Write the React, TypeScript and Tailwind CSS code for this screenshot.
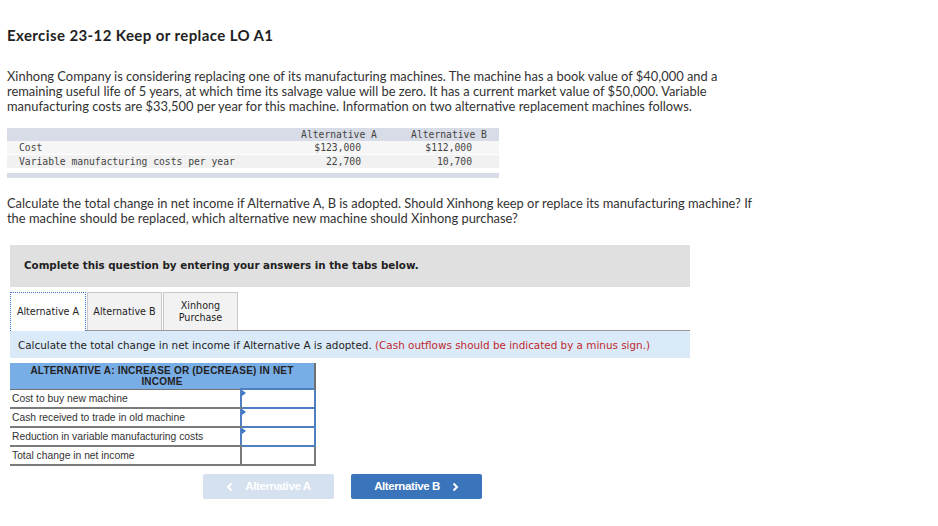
import React from "react";

const rows = [
  "Cost to buy new machine",
  "Cash received to trade in old machine",
  "Reduction in variable manufacturing costs",
];

const InputCell = () => (
  <td className="relative border-2 border-[#4f7fc0] bg-white p-0">
    <span className="absolute left-0 top-0 h-0 w-0 border-y-[3px] border-l-[4px] border-y-transparent border-l-[#3d78c7]" />
  </td>
);

const Chevron = ({ dir }: { dir: "left" | "right" }) => (
  <svg width="8" height="10" viewBox="0 0 8 10" className="shrink-0">
    <path
      d={dir === "left" ? "M5.5 1.5 L2 5 L5.5 8.5" : "M2.5 1.5 L6 5 L2.5 8.5"}
      fill="none"
      stroke="white"
      strokeWidth="2"
    />
  </svg>
);

const App = () => {
  return (
    <div className="h-[526px] w-[938px] bg-white pl-[7px] pt-[26px] text-[#222] font-[Lato,sans-serif]">
      <h1 className="text-[15px] font-bold leading-[18px] tracking-[0.4px] text-[#222]">
        Exercise 23-12 Keep or replace LO A1
      </h1>

      <p className="mt-[25px] w-[725px] text-[12.9px] leading-[15px] text-[#333]">
        Xinhong Company is considering replacing one of its manufacturing machines. The machine has a book value of $40,000 and a
        remaining useful life of 5 years, at which time its salvage value will be zero. It has a current market value of $50,000. Variable
        manufacturing costs are $33,500 per year for this machine. Information on two alternative replacement machines follows.
      </p>

      <table className="mt-[14px] w-[492px] border-collapse text-[9.7px] leading-[13px] text-[#444] font-[DejaVu_Sans_Mono,monospace]">
        <thead>
          <tr className="bg-[#d8dce6]">
            <th className="w-[294px]"></th>
            <th className="w-[76px] text-center font-normal">Alternative A</th>
            <th className="w-[34px]"></th>
            <th className="w-[76px] text-center font-normal">Alternative B</th>
            <th></th>
          </tr>
        </thead>
        <tbody>
          <tr className="border-b border-white bg-[#f6f6f6]">
            <td className="pl-[12px]">Cost</td>
            <td className="pr-[16px] text-right">$123,000</td>
            <td></td>
            <td className="pr-[15px] text-right">$112,000</td>
            <td></td>
          </tr>
          <tr className="bg-[#f1f1f1]">
            <td className="pl-[12px]">Variable manufacturing costs per year</td>
            <td className="pr-[16px] text-right">22,700</td>
            <td></td>
            <td className="pr-[15px] text-right">10,700</td>
            <td></td>
          </tr>
        </tbody>
      </table>
      <div className="mt-[5px] h-[5px] w-[492px] bg-[#d8dce6]" />

      <p className="mt-[18px] w-[760px] text-[12.9px] leading-[15px] text-[#333]">
        Calculate the total change in net income if Alternative A, B is adopted. Should Xinhong keep or replace its manufacturing machine? If
        the machine should be replaced, which alternative new machine should Xinhong purchase?
      </p>

      <div className="ml-[3px] w-[680px] font-[DejaVu_Sans,sans-serif]">
        <div className="mt-[19px] flex h-[42px] items-center bg-[#e0e0e0] pl-[14px] text-[10.3px] font-bold text-[#222]">
          Complete this question by entering your answers in the tabs below.
        </div>

        <div className="mt-[5px] flex h-[39px] items-stretch text-[9.6px] leading-[12px] text-[#222]">
          <div className="flex w-[76px] items-center justify-center border border-dotted border-b-0 border-[#3a6fc4] bg-white">
            Alternative A
          </div>
          <div className="flex flex-1 items-stretch border-b border-[#999]">
            <div className="ml-[1px] flex w-[75px] items-center justify-center border border-b-0 border-[#c8c8c8] bg-[#f2f2f2]">
              Alternative B
            </div>
            <div className="ml-[1px] flex w-[75px] items-center justify-center border border-b-0 border-[#c8c8c8] bg-[#f2f2f2] text-center">
              Xinhong
              <br />
              Purchase
            </div>
          </div>
        </div>

        <div className="flex h-[27px] items-center bg-[#dbeaf8] pl-[8px] pt-[3px] text-[10.4px] text-[#222]">
          Calculate the total change in net income if Alternative A is adopted.&nbsp;
          <span className="text-[#c0282d]">(Cash outflows should be indicated by a minus sign.)</span>
        </div>

        <table className="mt-[5px] w-[306px] border-collapse font-[Liberation_Sans,Arial,sans-serif] text-[10.3px]">
          <thead>
            <tr>
              <th
                colSpan={2}
                className="h-[26px] border-r-2 border-b border-[#707070] bg-[#79ade6] px-[14px] text-center text-[10px] font-bold leading-[11px] tracking-[0.2px] text-[#222]"
              >
                ALTERNATIVE A: INCREASE OR (DECREASE) IN NET INCOME
              </th>
            </tr>
          </thead>
          <tbody>
            {rows.map((r) => (
              <tr key={r} className="h-[19px]">
                <td className="w-[231px] border-b-2 border-[#7a7a7a] pl-[2px] text-[#333]">{r}</td>
                <InputCell />
              </tr>
            ))}
            <tr className="h-[19px]">
              <td className="border-b-2 border-[#7a7a7a] pl-[2px] text-[#333]">Total change in net income</td>
              <td className="border-2 border-t-0 border-[#7a7a7a] bg-white"></td>
            </tr>
          </tbody>
        </table>

        <div className="ml-[193px] mt-[8px] flex gap-[17px] font-[Liberation_Sans,Arial,sans-serif] text-[11.5px] font-bold tracking-[-0.4px] text-white">
          <div className="flex h-[25px] w-[131px] items-center justify-center gap-[11px] rounded-[2px] bg-[#d5e1ef]">
            <Chevron dir="left" />
            <span>Alternative A</span>
          </div>
          <div className="flex h-[25px] w-[131px] items-center justify-center gap-[11px] rounded-[2px] bg-[#3a74ba]">
            <span>Alternative B</span>
            <Chevron dir="right" />
          </div>
        </div>
      </div>
    </div>
  );
};

export default App;
